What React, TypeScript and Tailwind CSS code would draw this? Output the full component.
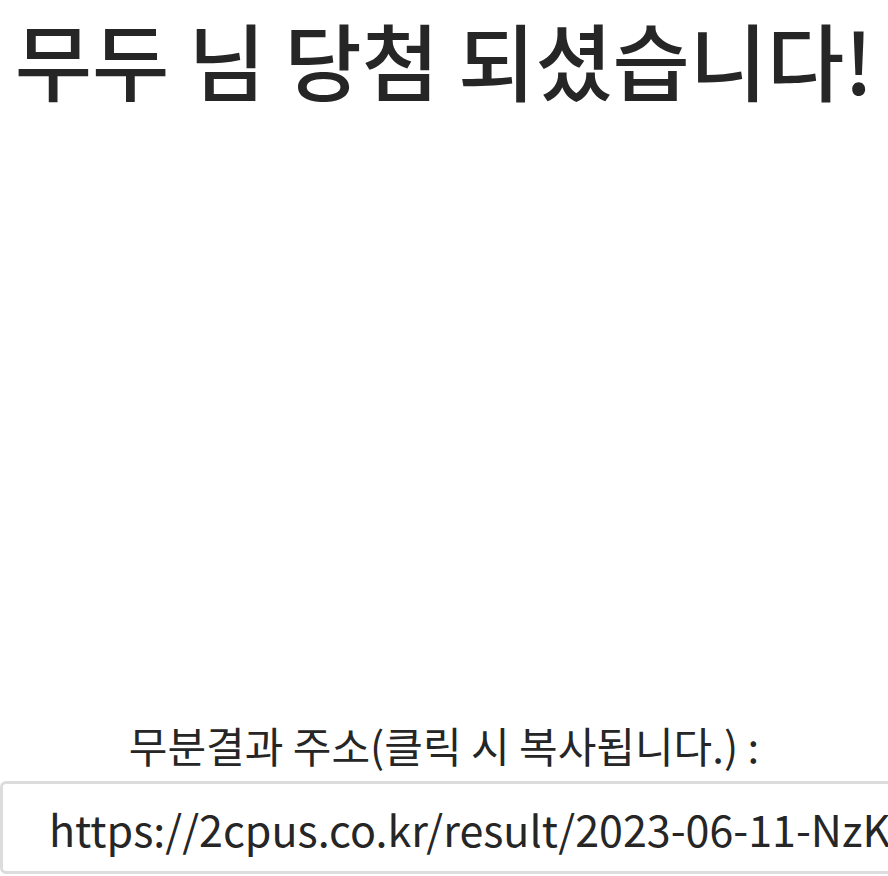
export default function App() {
  const font = { fontFamily: '"Noto Sans CJK KR", "Noto Sans", sans-serif' };
  return (
    <div
      className="h-[876px] w-[888px] overflow-hidden bg-white text-[#262626] [font-feature-settings:'palt']"
      style={font}
    >
      <h1 className="pt-[9px] text-center text-[84px] font-medium leading-[1.2] whitespace-nowrap">
        무두 님 당첨 되셨습니다!
      </h1>
      <div className="mt-[608px] flex flex-col">
        <p className="text-center text-[42px] leading-[1.3] whitespace-nowrap">
          무분결과 주소(클릭 시 복사됩니다.) :
        </p>
        <div className="mt-[9px] flex h-[93px] w-[1100px] items-center rounded-[6px] border-[3px] border-[#dcdcdc] pl-[46px]">
          <span className="text-[43px] whitespace-nowrap">
            https://2cpus.co.kr/result/2023-06-11-NzK
          </span>
        </div>
      </div>
    </div>
  );
}
